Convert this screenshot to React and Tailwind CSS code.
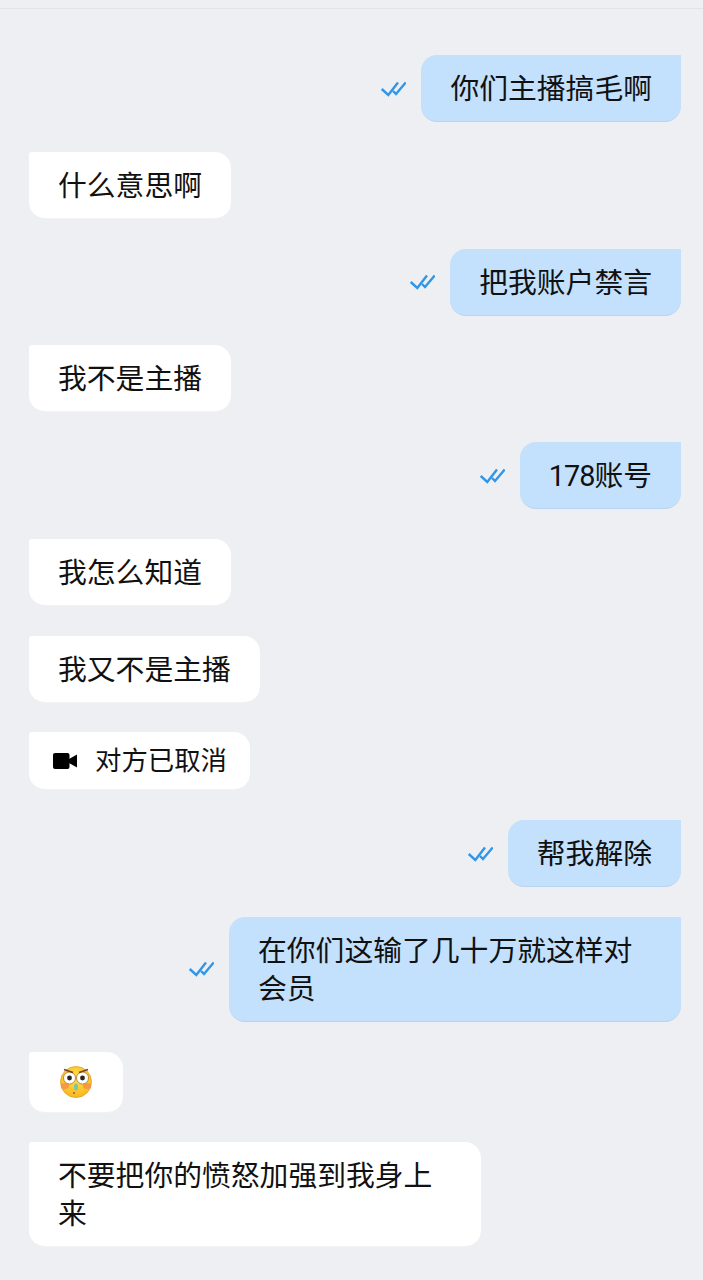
import React from 'react';

const messages = [
  { id: 1, mine: true, text: '你们主播搞毛啊' },
  { id: 2, text: '什么意思啊' },
  { id: 3, mine: true, text: '把我账户禁言' },
  { id: 4, text: '我不是主播' },
  { id: 5, mine: true, text: <><span className="tracking-[-1px]">178</span>账号</> },
  { id: 6, text: '我怎么知道' },
  { id: 7, text: '我又不是主播' },
  { id: 8, call: true, text: '对方已取消' },
  { id: 9, mine: true, text: '帮我解除' },
  { id: 10, mine: true, text: '在你们这输了几十万就这样对会员', width: 'w-[452px]' },
  { id: 11, emoji: true },
  { id: 12, text: '不要把你的愤怒加强到我身上来', width: 'w-[452px]' },
];

function Ticks() {
  return (
    <svg width="26" height="18" viewBox="0 0 26 18" fill="none" stroke="#2f96e8" strokeWidth="2.4" className="mr-[15px] shrink-0">
      <path d="M1.7 9 L8.3 15 L18 2.5" />
      <path d="M13 11 L16 14 L25.7 2.5" />
    </svg>
  );
}

function VideoIcon() {
  return (
    <svg width="24" height="16" viewBox="0 0 24 16" fill="#000" className="mr-[18px] shrink-0">
      <rect x="0" y="0" width="16.5" height="16" rx="2" />
      <path d="M16 6 L24 1.5 V14.5 L16 10 Z" />
    </svg>
  );
}

function Face() {
  return (
    <svg width="32" height="33" viewBox="0 0 32 33">
      <defs>
        <radialGradient id="faceFill" cx="50%" cy="35%" r="65%">
          <stop offset="0%" stopColor="#ffe04a" />
          <stop offset="100%" stopColor="#f8b820" />
        </radialGradient>
      </defs>
      <circle cx="16" cy="17" r="15.5" fill="url(#faceFill)" stroke="#e0a030" strokeWidth="0.8" />
      <ellipse cx="5" cy="21" rx="4" ry="3" fill="#f58a4c" opacity="0.75" />
      <ellipse cx="27" cy="21" rx="4" ry="3" fill="#f58a4c" opacity="0.75" />
      <circle cx="9.5" cy="13" r="6" fill="#fff" stroke="#a8742c" strokeWidth="0.8" />
      <circle cx="22.5" cy="13" r="6" fill="#fff" stroke="#a8742c" strokeWidth="0.8" />
      <circle cx="9.5" cy="13" r="2.4" fill="#2a2320" />
      <circle cx="22.5" cy="13" r="2.4" fill="#2a2320" />
      <path d="M4 4.5 L13 7.5 M28 4.5 L19 7.5" stroke="#7a4518" strokeWidth="1.8" />
      <ellipse cx="16" cy="22" rx="2" ry="3.5" fill="#7cc4a8" />
      <circle cx="14" cy="28" r="1" fill="#b8502a" />
    </svg>
  );
}

function Bubble({ msg }) {
  const base = 'border-b border-black/5 text-[#111]';
  if (msg.call) {
    return (
      <div className={`${base} flex items-center h-[58px] pl-[24px] pr-[23px] bg-white rounded-[16px] rounded-tl-[3px] text-[26.4px]`}>
        <VideoIcon />
        <span className="pt-[2px]">{msg.text}</span>
      </div>
    );
  }
  if (msg.emoji) {
    return (
      <div className={`${base} flex items-center justify-center w-[94px] h-[61px] bg-white rounded-[16px] rounded-tl-[3px]`}>
        <Face />
      </div>
    );
  }
  return (
    <div className={`${base} ${msg.width || ''} text-[28.8px] leading-[38px] px-[29px] pt-[15px] pb-[13px] rounded-[16px] ${msg.mine ? 'bg-[#c3e0fd] rounded-tr-none' : 'bg-white rounded-tl-[3px]'}`}>
      {msg.text}
    </div>
  );
}

export default function App() {
  return (
    <div className="w-[703px] h-[1280px] overflow-hidden bg-[#edeff3] pt-[8px] font-['Roboto','Noto_Sans_CJK_SC',sans-serif]">
      <div className="border-t border-[#e2e3e8] pt-[46px] pl-[29px] pr-[22px] flex flex-col gap-[29.75px]">
        {messages.map(msg => (
          <div key={msg.id} className={`flex items-center ${msg.mine ? 'justify-end' : 'justify-start'}`}>
            {msg.mine && <Ticks />}
            <Bubble msg={msg} />
          </div>
        ))}
      </div>
    </div>
  );
}
